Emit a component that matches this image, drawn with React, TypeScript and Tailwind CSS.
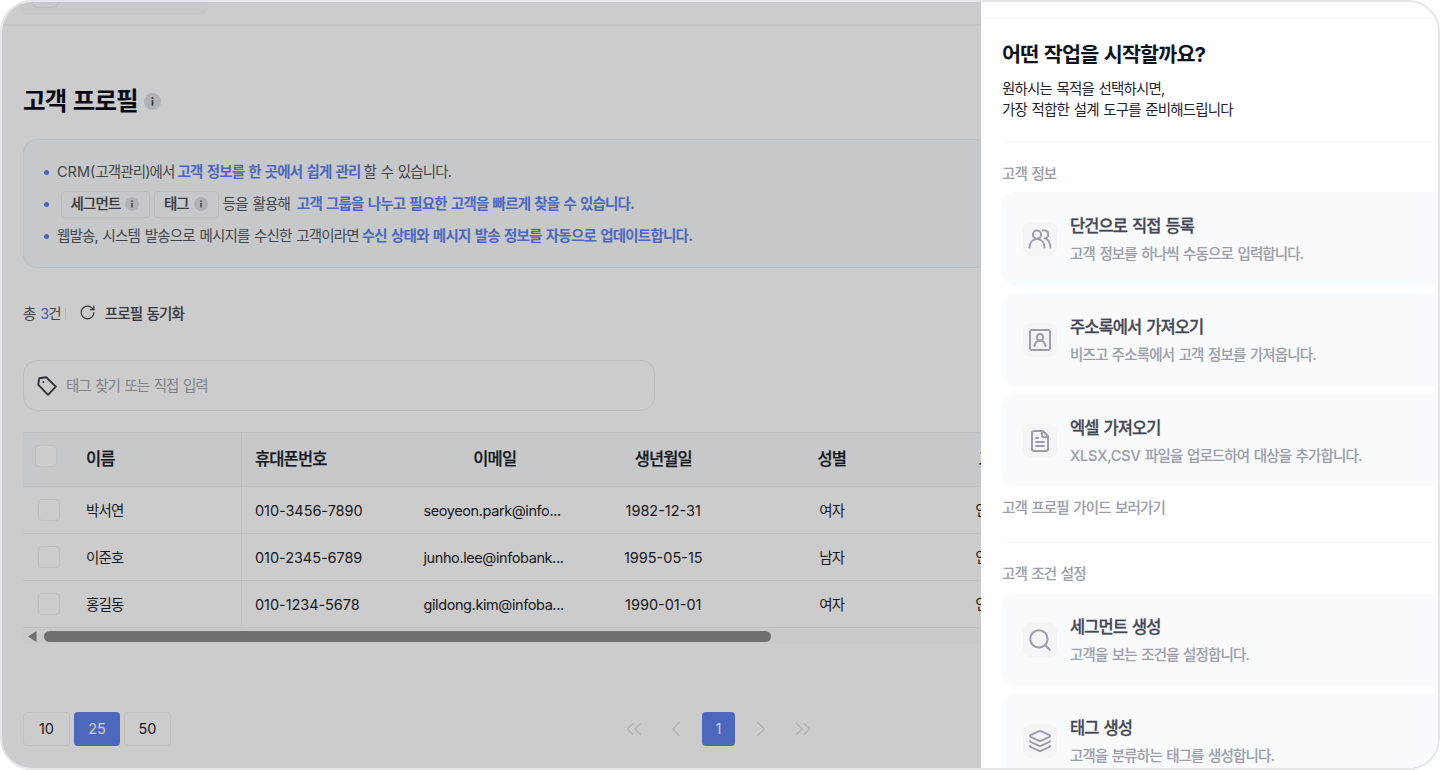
import React from "react";
import {
  ChevronLeft,
  ChevronRight,
  ChevronsLeft,
  ChevronsRight,
  FileText,
  Layers,
  RotateCw,
  Search,
} from "lucide-react";

type IconProps = { className?: string };

const PeopleIcon: React.FC<IconProps> = ({ className }) => (
  <svg className={className} viewBox="0 0 24 24" fill="none" stroke="currentColor" strokeWidth="2" strokeLinecap="round">
    <circle cx="9" cy="7.6" r="4.1" />
    <path d="M1.5 20.4c.2-4.9 3.2-8.4 7.5-8.4s7.3 3.5 7.5 8.4" />
    <path d="M14.8 3.5a4.1 4.1 0 0 1 2.6 7.9c3 1.5 4.8 4.9 5.1 9" />
  </svg>
);

const ContactIcon: React.FC<IconProps> = ({ className }) => (
  <svg className={className} viewBox="0 0 24 24" fill="none" stroke="currentColor" strokeWidth="2" strokeLinecap="round">
    <rect x="2" y="2" width="20" height="20" rx="2" />
    <circle cx="12" cy="9.2" r="3.2" />
    <path d="M6.6 18c.4-3.400 2.400-5.600 5.400-5.600s5 2.200 5.400 5.600" />
  </svg>
);

const TagIcon: React.FC<IconProps> = ({ className }) => (
  <svg className={className} viewBox="0 0 20 20" fill="none" stroke="currentColor" strokeWidth="1.9" strokeLinejoin="round">
    <path d="M1.2 8.6 2.3 2.2 9.2 1.2 18.8 10.6 11 18.8Z" />
    <circle cx="6.3" cy="6" r="1" fill="currentColor" stroke="none" />
  </svg>
);

const Info: React.FC<{ big?: boolean }> = ({ big }) => (
  <svg className={big ? "size-[17px]" : "size-[14px]"} viewBox="0 0 16 16">
    <circle cx="8" cy="8" r="8" fill="#dddfe3" />
    <circle cx="8" cy="4.7" r="1" fill="#464c53" />
    <rect x="7.2" y="6.7" width="1.6" height="5.2" fill="#464c53" />
  </svg>
);

const Check: React.FC<IconProps> = ({ className }) => (
  <span className={`block size-[22px] rounded-[4px] border border-[#efefef] bg-white ${className ?? ""}`} />
);

const rows = [
  { name: "박서연", phone: "010-3456-7890", email: "seoyeon.park@info...", birth: "1982-12-31", gender: "여자" },
  { name: "이준호", phone: "010-2345-6789", email: "junho.lee@infobank...", birth: "1995-05-15", gender: "남자" },
  { name: "홍길동", phone: "010-1234-5678", email: "gildong.kim@infoba...", birth: "1990-01-01", gender: "여자" },
];

const infoCards = [
  { id: "single", icon: <PeopleIcon className="size-6" />, title: "단건으로 직접 등록", desc: "고객 정보를 하나씩 수동으로 입력합니다." },
  { id: "address", icon: <ContactIcon className="size-6" />, title: "주소록에서 가져오기", desc: "비즈고 주소록에서 고객 정보를 가져옵니다." },
  {
    id: "excel",
    icon: <FileText className="size-6" strokeWidth={2} />,
    title: "엑셀 가져오기",
    desc: (
      <>
        <span className="tracking-[-0.01em]">XLSX,CSV</span> 파일을 업로드하여 대상을 추가합니다.
      </>
    ),
  },
];

const conditionCards = [
  { id: "segment", icon: <Search className="size-[26px]" strokeWidth={1.9} />, title: "세그먼트 생성", desc: "고객을 보는 조건을 설정합니다." },
  { id: "tag", icon: <Layers className="size-6" strokeWidth={1.9} />, title: "태그 생성", desc: "고객을 분류하는 태그를 생성합니다." },
];

const Card: React.FC<{ icon: React.ReactNode; title: string; desc: React.ReactNode }> = ({ icon, title, desc }) => (
  <div className="flex h-[93px] shrink-0 items-center gap-[13px] rounded-l-xl bg-[#f9fafc] pl-[21px]">
    <div className="flex size-[34px] items-center justify-center rounded-lg bg-[#f4f5f7] text-[#9c9faa]">{icon}</div>
    <div className="mt-px flex flex-col gap-[6px] whitespace-nowrap">
      <p className="text-[16.5px] leading-[22px] font-medium tracking-[-0.055em] text-[#454854] [-webkit-text-stroke:0.3px]">{title}</p>
      <p className="text-[14.5px] leading-[21px] font-medium text-[#9c9faa] [-webkit-text-stroke:0.12px]">{desc}</p>
    </div>
  </div>
);

const Chip: React.FC<{ label: string }> = ({ label }) => (
  <span className="flex h-[27px] items-center gap-[5px] rounded-[4px] border border-[#ebecef] pr-[10px] pl-[8.5px] font-medium text-[#464950] [-webkit-text-stroke:0.15px]">
    {label}
    <Info />
  </span>
);

const Bullet = () => <span className="mr-2 ml-5 size-[5px] rounded-full bg-[#5f82ec]" />;

const App: React.FC = () => {
  return (
    <div className="flex h-[770px] w-[1440px] overflow-hidden rounded-[32px] border-2 border-[#e5e5ec] bg-white font-[Inter,'Noto_Sans_CJK_KR',sans-serif] text-[14.5px] tracking-[-0.06em] [word-spacing:0.1em]">
      <main className="relative w-[979px] shrink-0 overflow-hidden pl-[21px] whitespace-nowrap">
        <header className="-mx-[21px] h-[24px] border-b-2 border-[#f5f5f5] pl-[18px]">
          <div className="h-[13px] w-[188px] rounded-b-lg bg-[#f8fafc] pl-3">
            <div className="h-[6px] w-[27px] rounded-b-lg border border-t-0 border-[#ebecef]" />
          </div>
        </header>

        <div className="mt-[57px] flex h-[36px] items-center gap-[6px]">
          <h1 className="text-[24.5px] leading-9 font-bold text-[#0c0c1c]">고객 프로필</h1>
          <Info big />
        </div>

        <section className="mt-5 h-[129px] rounded-l-[14px] border border-r-0 border-[#eff0f2] bg-[#f9fbfd] pt-4 text-[#55585f]">
          <div className="flex h-8 items-center">
            <Bullet />
            <span><span className="tracking-normal">CRM(</span>고객관리)에서</span>
            <b className="ml-[3px] font-bold tracking-[-0.057em] text-[#5f82ec]">고객 정보를 한 곳에서 쉽게 관리</b>
            <span className="ml-[3px]">할 수 있습니다.</span>
          </div>
          <div className="flex h-8 items-center">
            <Bullet />
            <div className="ml-1 flex gap-1">
              <Chip label="세그먼트" />
              <Chip label="태그" />
            </div>
            <span className="ml-1">등을 활용해</span>
            <b className="ml-[7px] font-bold tracking-[-0.056em] text-[#5f82ec]">고객 그룹을 나누고 필요한 고객을 빠르게 찾을 수 있습니다.</b>
          </div>
          <div className="flex h-8 items-center">
            <Bullet />
            <span className="tracking-[-0.058em]">웹발송, 시스템 발송으로 메시지를 수신한 고객이라면</span>
            <b className="ml-[3px] font-bold tracking-[-0.053em] text-[#5f82ec]">수신 상태와 메시지 발송 정보를 자동으로 업데이트합니다.</b>
          </div>
        </section>

        <div className="mt-[32px] flex h-7 items-center text-[#55585f]">
          <span>총 <span className="text-[#5f6fe0]">3</span>건</span>
          <span className="ml-1 h-3 w-px bg-[#e8e8e8]" />
          <RotateCw className="mb-1 ml-[13px] size-[17px] text-[#464950]" strokeWidth={1.7} />
          <span className="ml-[9px] font-medium text-[#464950] [-webkit-text-stroke:0.15px]">프로필 동기화</span>
        </div>

        <div className="mt-[32px] flex h-[51px] w-[632px] items-center gap-[9px] rounded-[14px] border border-[#eeeeee] pl-[13px] text-[#a0a3aa]">
          <TagIcon className="size-5 text-[#3d4049]" />
          <span className="tracking-[-0.068em]">태그 찾기 또는 직접 입력</span>
        </div>

        {/* last column runs under the drawer */}
        <div className="mt-[21px] w-[1063px] text-[#1c1e29]">
          <div className="grid h-[55px] grid-cols-[219px_repeat(5,168.5px)] border-y border-[#eff0f3] bg-[#f9fbfd] text-[16.5px] font-medium [-webkit-text-stroke:0.25px]">
            <div className="flex items-center border-r border-[#f0f0f2] pl-[12px]">
              <Check className="mb-[7px]" />
              <span className="ml-[29px]">이름</span>
            </div>
            <div className="flex items-center pl-[13px]">휴대폰번호</div>
            <div className="flex items-center justify-center">이메일</div>
            <div className="flex items-center justify-center">생년월일</div>
            <div className="flex items-center justify-center">성별</div>
            <div className="flex items-center justify-center">고객사</div>
          </div>
          {rows.map((row) => (
            <div key={row.phone} className="grid h-[47px] grid-cols-[219px_repeat(5,168.5px)] border-b border-[#f1f1f1]">
              <div className="flex items-center border-r border-[#f5f5f5] pl-[15px]">
                <Check />
                <span className="mt-px ml-[26px]">{row.name}</span>
              </div>
              <div className="flex items-center pt-px pl-[13px] tracking-[-0.004em]">{row.phone}</div>
              <div className="flex items-center pt-px pl-[13px] tracking-[-0.028em]">{row.email}</div>
              <div className="flex items-center justify-center pt-px tracking-normal">{row.birth}</div>
              <div className="flex items-center justify-center pt-px">{row.gender}</div>
              <div className="flex items-center justify-center pt-px">인포뱅크</div>
            </div>
          ))}
          <div className="flex h-4 items-center bg-[#fdfdfd] pl-[5px]">
            <svg className="h-[11px] w-[9px] text-[#8c8c8c]" viewBox="0 0 9 11">
              <path d="M8.5 0v11L0 5.5Z" fill="currentColor" />
            </svg>
            <span className="ml-[7px] h-[11px] w-[727px] rounded-full bg-[#8c8c8c]" />
          </div>
        </div>

        <footer className="mt-[68px] flex h-[34px] items-center tracking-normal text-[#1c1e29]">
          <div className="flex h-full gap-1">
            <button className="w-[47px] rounded-[4px] border border-[#f0f0f0]">10</button>
            <button className="w-[46px] rounded-[4px] bg-[#5f82ec] text-white">25</button>
            <button className="w-[47px] rounded-[4px] border border-[#f0f0f0]">50</button>
          </div>
          <div className="ml-[450px] flex h-full items-center text-[#e3e3e3]">
            <ChevronsLeft className="size-[26px]" strokeWidth={1.3} />
            <ChevronLeft className="ml-4 size-[26px]" strokeWidth={1.3} />
            <span className="mx-[13px] flex h-full w-[33px] items-center justify-center rounded-[4px] bg-[#5f82ec] text-white">1</span>
            <ChevronRight className="size-[26px]" strokeWidth={1.3} />
            <ChevronsRight className="ml-4 size-[26px]" strokeWidth={1.3} />
          </div>
        </footer>

        {/* dimmed backdrop behind the drawer */}
        <div className="absolute inset-0 bg-black/20" />
      </main>

      <aside className="flex flex-1 flex-col overflow-hidden pt-4">
        <div className="h-px shrink-0 bg-[#f7f7f9]" />
        <div className="flex min-h-0 flex-1 flex-col pl-[21px]">
          <h2 className="mt-[21px] text-[20.7px] leading-[30px] font-bold text-[#10121f]">어떤 작업을 시작할까요?</h2>
          <p className="mt-[8px] leading-[21px] text-[#1f2230]">
            원하시는 목적을 선택하시면,
            <br />
            가장 적합한 설계 도구를 준비해드립니다
          </p>
          <div className="mt-[21px] h-px shrink-0 bg-[#f7f7f9]" />
          <p className="mt-[21px] leading-[21px] font-medium text-[#9c9faa] [-webkit-text-stroke:0.12px]">고객 정보</p>
          <div className="mt-2 flex flex-col gap-2">
            {infoCards.map(({ id, ...card }) => (
              <Card key={id} {...card} />
            ))}
          </div>
          <p className="mt-[10px] leading-[21px] font-medium text-[#9c9faa] [-webkit-text-stroke:0.12px]">고객 프로필 가이드 보러가기</p>
          <div className="mt-6 h-px shrink-0 bg-[#f7f7f9]" />
          <p className="mt-5 leading-[21px] font-medium text-[#9c9faa] [-webkit-text-stroke:0.12px]">고객 조건 설정</p>
          <div className="mt-[9px] flex flex-col gap-2">
            {conditionCards.map(({ id, ...card }) => (
              <Card key={id} {...card} />
            ))}
          </div>
        </div>
      </aside>
    </div>
  );
};

export default App;
